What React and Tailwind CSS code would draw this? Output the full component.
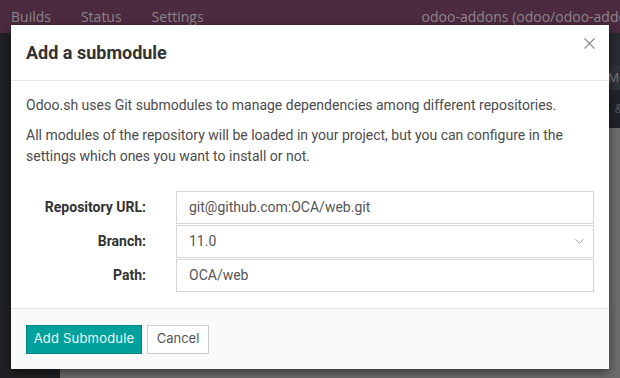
import { ChevronDown } from 'lucide-react'

const roboto = { fontFamily: 'Roboto, "Noto Sans", sans-serif' }

function Field({ label, children }) {
    return (
        <div className="flex items-center">
            <label className="w-[120px] shrink-0 text-right text-[14px] font-bold text-[#333]">{label}</label>
            <div className="ml-[30px] flex-1">{children}</div>
        </div>
    )
}

export default function App() {
    return (
        <div className="relative w-[620px] h-[378px] overflow-hidden bg-[#6b6b6b] flex flex-col" style={roboto}>
            {/* page behind the backdrop */}
            <div
                className="h-[33px] shrink-0 bg-[#4c2a40] flex items-center px-[11px] text-[14px] text-[#8d878b] overflow-hidden"
                style={{ fontFamily: '"Open Sans", sans-serif' }}
            >
                <span>Builds</span>
                <span className="ml-[30px]">Status</span>
                <span className="ml-[30px]">Settings</span>
                <span className="ml-[218px] whitespace-nowrap">odoo-addons (odoo/odoo-addons)</span>
            </div>
            <div className="flex flex-1">
                <div className="w-[60px] shrink-0 bg-[#1e2023]" />
                <div className="flex-1 flex flex-col">
                    <div className="h-[32px] bg-[#282b2f]" />
                    <div className="h-[25px] bg-[#2f3236] flex items-center justify-end text-[13px] text-[#6f7276]">
                        <span className="mr-[-6px]">Me</span>
                    </div>
                    <div className="h-[38px] bg-[#202326] flex items-center justify-end text-[12px] italic text-[#55585c]">
                        <span className="mr-[-2px]">&amp;</span>
                    </div>
                    <div className="flex-1 bg-[#6b6b6b]" />
                </div>
            </div>

            {/* modal */}
            <div className="absolute left-[11px] top-[25px] w-[598px] h-[344px] bg-white flex flex-col shadow-[0_3px_9px_rgba(0,0,0,0.5)]">
                <div className="h-[56px] shrink-0 flex items-center justify-between px-[15px] border-b border-[#e5e5e5]">
                    <h4 className="text-[18px] font-bold text-[#333] mt-[-1px]">Add a submodule</h4>
                    <svg width="11" height="11" viewBox="0 0 11 11" className="mr-[-1px] mt-[-18px]">
                        <path d="M0.5 0.5L10.5 10.5M10.5 0.5L0.5 10.5" stroke="#8a8a8a" strokeWidth="1.1" />
                    </svg>
                </div>
                <div className="flex-1 px-[15px] pt-[14px] text-[14px] leading-[21px] text-[#4c4c4c]">
                    <p className="mb-[9px]">Odoo.sh uses Git submodules to manage dependencies among different repositories.</p>
                    <p>
                        All modules of the repository will be loaded in your project, but you can configure in the settings which ones you want to install or not.
                    </p>
                    <div className="mt-[24px] flex flex-col gap-[1px]">
                        <Field label="Repository URL:">
                            <div className="h-[33px] border border-[#d6d6d6] px-[12px] flex items-center text-[#555]">git@github.com:OCA/web.git</div>
                        </Field>
                        <Field label="Branch:">
                            <div className="h-[33px] border border-[#d6d6d6] pl-[12px] pr-[6px] flex items-center justify-between text-[#555]">
                                <span>11.0</span>
                                <ChevronDown className="w-[15px] h-[15px] text-[#8f8f8f]" strokeWidth={1.4} />
                            </div>
                        </Field>
                        <Field label="Path:">
                            <div className="h-[33px] border border-[#d6d6d6] px-[12px] flex items-center text-[#555]">OCA/web</div>
                        </Field>
                    </div>
                </div>
                <div
                    className="h-[61px] shrink-0 border-t border-[#e5e5e5] bg-[#f9fafa] flex items-center px-[15px] gap-[5px]"
                    style={{ fontFamily: 'Inter, "Noto Sans", sans-serif' }}
                >
                    <button className="h-[29px] w-[116px] bg-[#00a09d] border border-[#00877f] text-[#eefaf9] text-[13px] tracking-[0.2px]">Add Submodule</button>
                    <button className="h-[29px] w-[62px] bg-white border border-[#cccccc] text-[#555] text-[13px]">Cancel</button>
                </div>
            </div>
        </div>
    )
}
